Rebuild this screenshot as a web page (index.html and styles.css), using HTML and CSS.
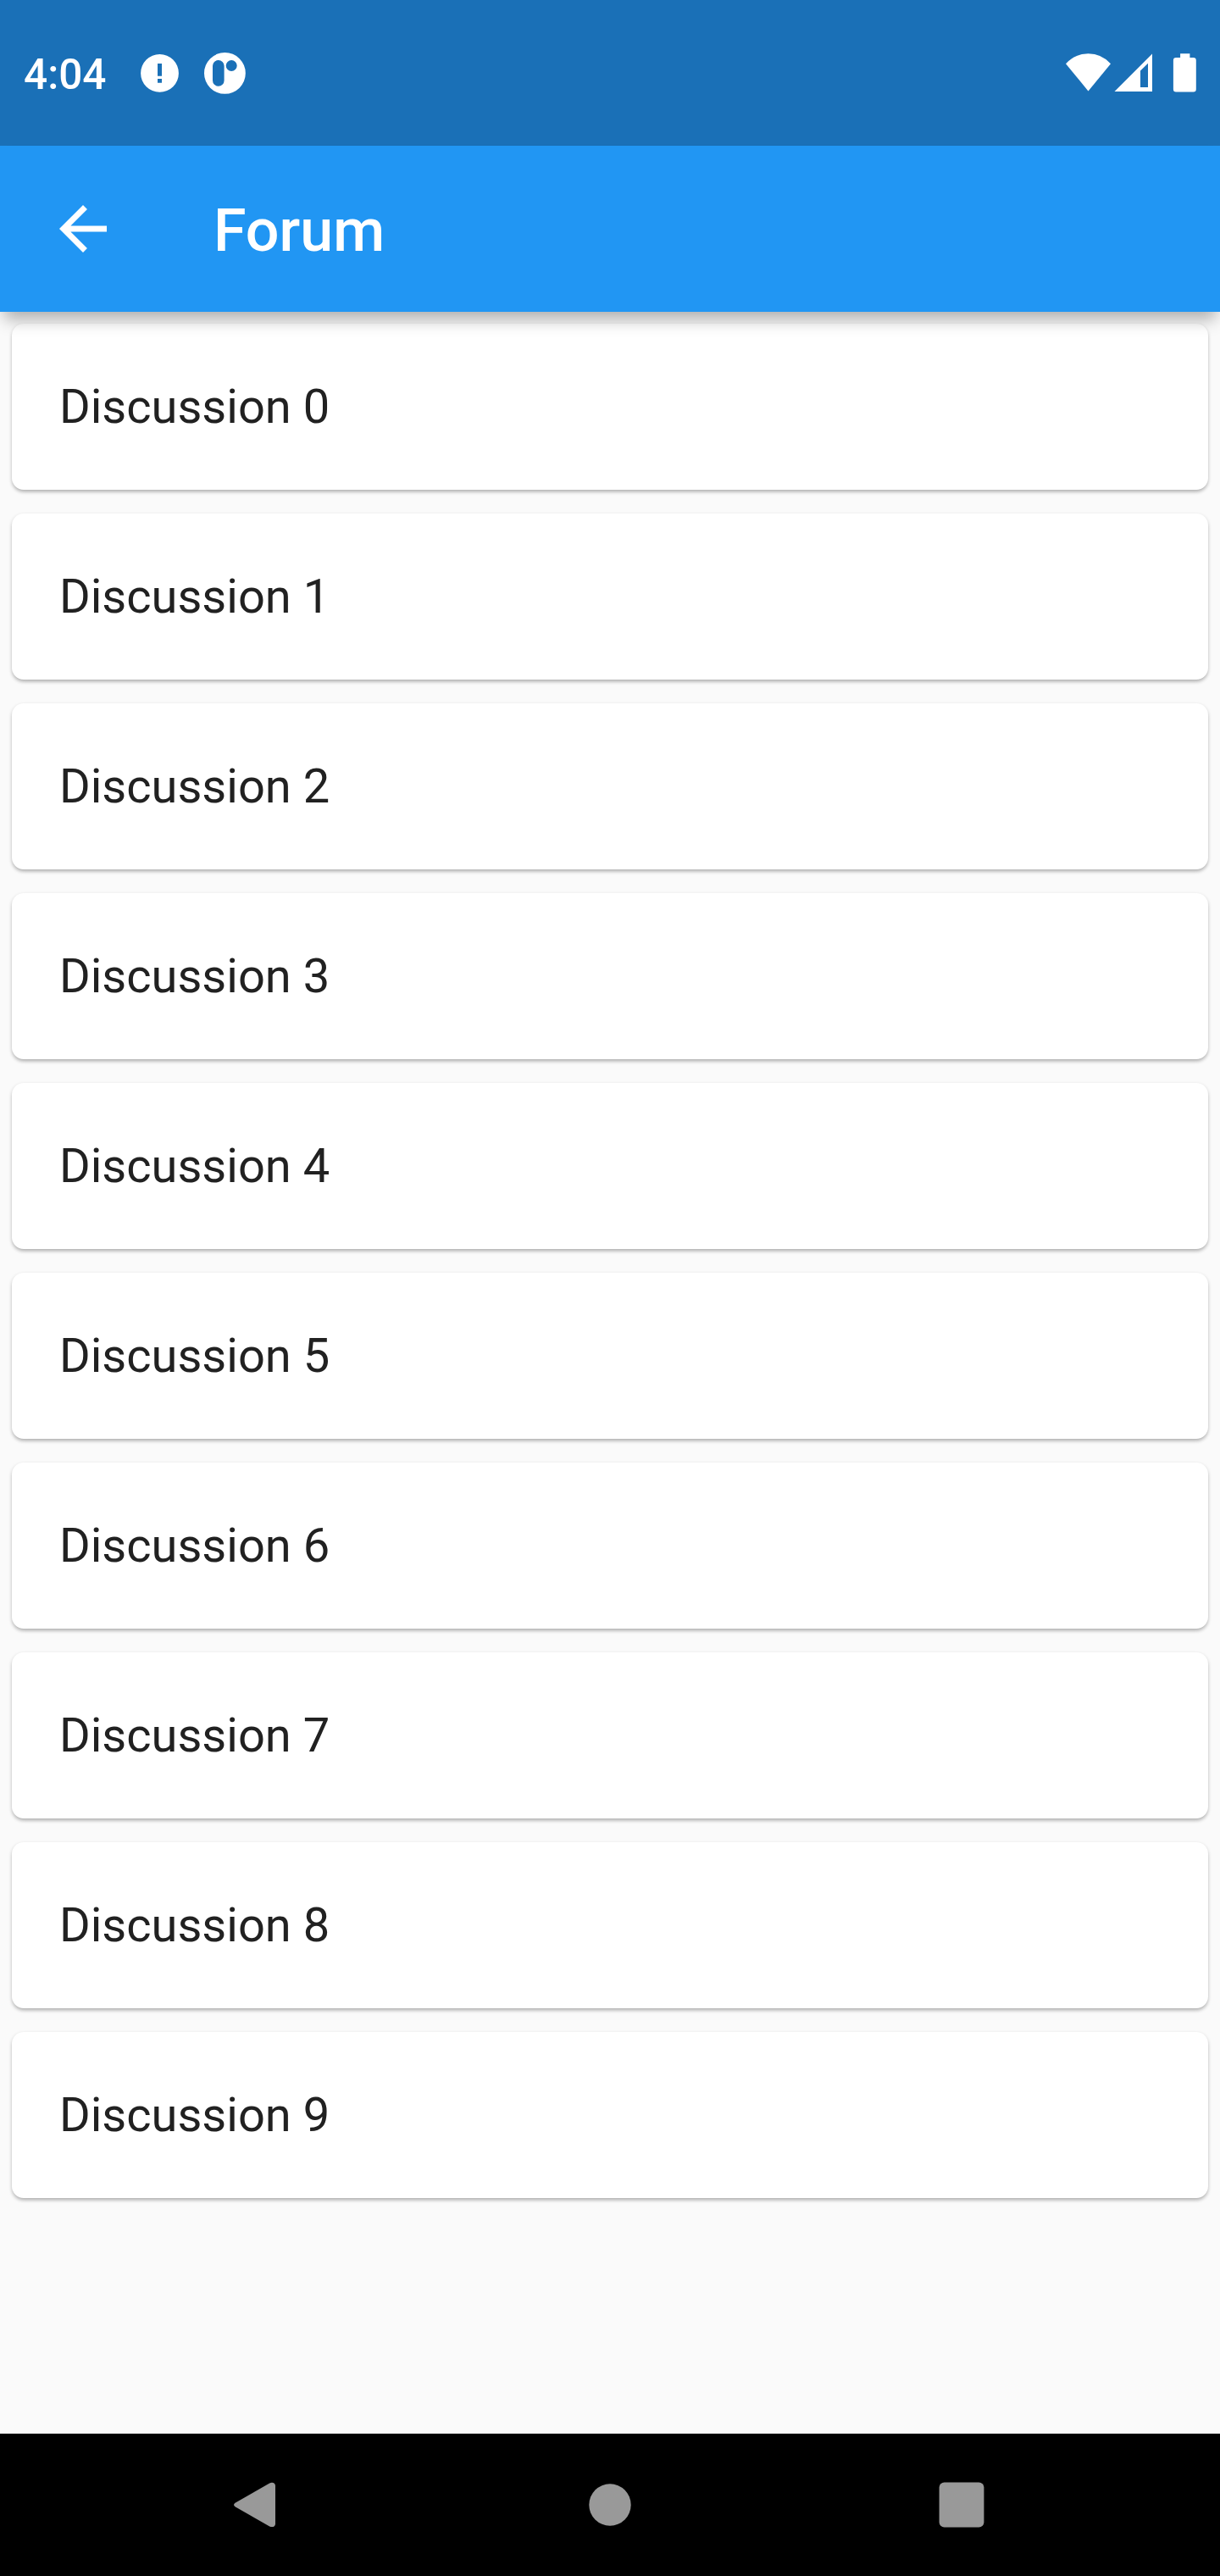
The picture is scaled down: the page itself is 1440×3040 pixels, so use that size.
FILE: index.html
```html
<!DOCTYPE html>
<html lang="en">
<head>
<meta charset="utf-8">
<title>Forum</title>
<link rel="stylesheet" href="styles.css">
</head>
<body>
<div class="screen">
  <div class="status-bar">
    <span class="clock">4:04</span>
    <svg class="notices" viewBox="0 0 130 52" aria-hidden="true">
      <path fill="#fff" fill-rule="evenodd" d="M28.5 4a22.4 22.4 0 1 0 0 44.8a22.4 22.4 0 1 0 0-44.8zM26 15h5v14.7h-5zM26 33h5v4.7h-5z"/>
      <path fill="#fff" fill-rule="evenodd" d="M105.4 2a24.4 24.4 0 1 0 0 48.8a24.4 24.4 0 1 0 0-48.8zM97.8 11a6.8 6.8 0 0 1 6.8 6.8v17.2a6.8 6.8 0 0 1-13.6 0v-17.2a6.8 6.8 0 0 1 6.8-6.8zM113.2 11a6.5 6.5 0 1 1 0 13a6.5 6.5 0 1 1 0-13z"/>
    </svg>
    <svg class="signals" viewBox="0 0 160 50" aria-hidden="true">
      <g fill="#fff">
        <path d="M8 15.2Q19 3.3 34.5 3.3T61 15.2L34.5 47.5z"/>
        <path fill-rule="evenodd" d="M110 3.5V48H65.5zM105 14.7L96 23.5V43h9z"/>
        <path d="M143.1 3.3h11.3v4.8h4.2a3.2 3.2 0 0 1 3.2 3.2v34a3.2 3.2 0 0 1-3.2 3.2h-20.5a3.2 3.2 0 0 1-3.2-3.2v-34a3.2 3.2 0 0 1 3.2-3.2h5z"/>
      </g>
    </svg>
  </div>
  <header class="app-bar">
    <svg class="back-arrow" viewBox="0 0 24 24" aria-label="Back"><path fill="#fff" d="M20 11H7.83l5.59-5.59L12 4l-8 8 8 8 1.41-1.41L7.83 13H20v-2z"/></svg>
    <h1 class="title">Forum</h1>
  </header>
  <main class="list">
    <div class="card">Discussion 0</div>
    <div class="card">Discussion 1</div>
    <div class="card">Discussion 2</div>
    <div class="card">Discussion 3</div>
    <div class="card">Discussion 4</div>
    <div class="card">Discussion 5</div>
    <div class="card">Discussion 6</div>
    <div class="card">Discussion 7</div>
    <div class="card">Discussion 8</div>
    <div class="card">Discussion 9</div>
  </main>
  <nav class="nav-bar">
    <svg class="nav-icon" viewBox="0 0 60 60"><path fill="#999" d="M3 27.4L43.2 2.8C46.5 .9 50 2.6 50 6V54C50 57.4 46.5 59.1 43.2 57.2L3 32.6Q-1 30 3 27.4z" transform="translate(0 2) scale(1 .9333)"/></svg>
    <svg class="nav-icon" viewBox="0 0 60 60"><circle cx="30" cy="30" r="24.7" fill="#999"/></svg>
    <svg class="nav-icon" viewBox="0 0 60 60"><rect x="3.6" y="3.6" width="52.8" height="52.8" rx="6" fill="#999"/></svg>
  </nav>
</div>
</body>
</html>
```
FILE: styles.css
```css
* {
  box-sizing: border-box;
}

body {
  margin: 0;
  font-family: Roboto, "Liberation Sans", sans-serif;
}

.screen {
  display: flex;
  flex-direction: column;
  width: 1440px;
  height: 3040px;
  overflow: hidden;
  background: #fafafa;
}

.status-bar {
  display: flex;
  align-items: flex-start;
  height: 172px;
  padding: 60px 28px 0;
  background: #1a70b7;
}

.clock {
  width: 132px;
  color: #fff;
  font-size: 49.5px;
  font-weight: 500;
  line-height: 57px;
}

.notices {
  width: 130px;
  height: 52px;
}

.signals {
  width: 160px;
  height: 50px;
  margin-left: auto;
  margin-right: 2px;
  overflow: visible;
}

.app-bar {
  display: flex;
  align-items: center;
  height: 196px;
  padding-left: 56px;
  background: #2196f3;
  box-shadow: 0 14px 18px -5px rgba(0, 0, 0, 0.3);
  z-index: 1;
}

.back-arrow {
  width: 84px;
  height: 84px;
}

.title {
  margin: 0 0 0 112px;
  padding-top: 4px;
  color: #fff;
  font-size: 70px;
  font-weight: 500;
  line-height: 82px;
}

.list {
  display: flex;
  flex: 1;
  flex-direction: column;
  gap: 28px;
  padding: 14px;
}

.card {
  height: 196px;
  padding-left: 56px;
  border-radius: 14px;
  background: #fff;
  box-shadow: 0 2px 4px rgba(0, 0, 0, 0.22), 0 4px 5px -2px rgba(0, 0, 0, 0.14);
  color: #212121;
  font-size: 56px;
  line-height: 196px;
}

.nav-bar {
  display: flex;
  align-items: center;
  justify-content: center;
  gap: 355px;
  height: 168px;
  background: #000;
}

.nav-icon {
  width: 60px;
  height: 60px;
}
```
